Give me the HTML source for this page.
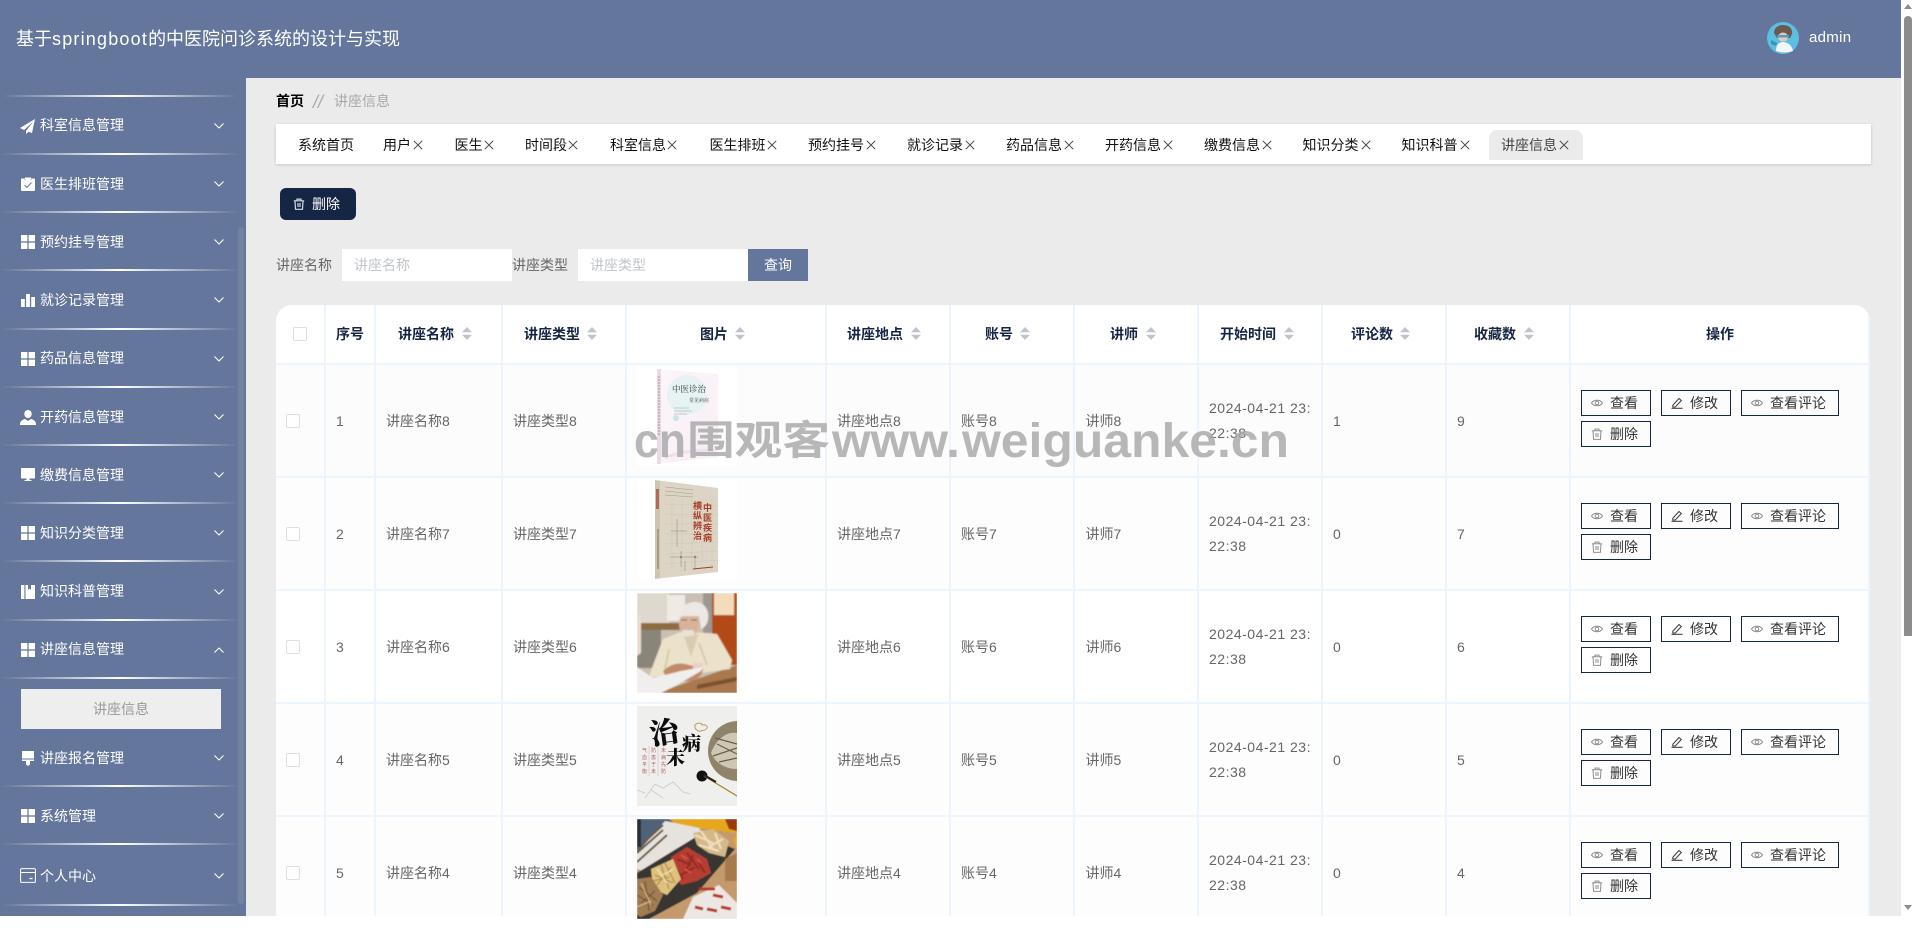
<!DOCTYPE html>
<html lang="zh"><head><meta charset="utf-8"><title>讲座信息</title>
<style>
*{box-sizing:border-box;margin:0;padding:0}
html,body{width:1912px;height:916px;overflow:hidden;background:#fff;font-family:"Liberation Sans","Noto Sans CJK SC",sans-serif;font-size:14px}
.a,.m,.ic,.ch,.sep,.t,.x,.c,.h,.s,.ck,.b,.l,svg.im{position:absolute}
#hd{position:absolute;left:0;top:0;width:1901px;height:78px;background:#64769b;color:#fff}
#side{position:absolute;left:0;top:78px;width:246px;height:838px;background:#64769b}
#main{position:absolute;left:246px;top:78px;width:1655px;height:838px;background:#ebebeb}
.m{left:40px;height:20px;line-height:20px;color:#fff;white-space:nowrap}
.ic{left:21px;width:14px;height:14px;fill:#fff}
.ch{left:214px;width:10px;height:6px;fill:none;stroke:#fff;stroke-width:1.1}
.sep{left:2px;width:236px;height:2px;background:linear-gradient(90deg,rgba(255,255,255,0),#fff 50%,rgba(255,255,255,0))}
.t{top:135px;height:20px;line-height:20px;color:#111;white-space:nowrap}
.x{top:140px;width:10px;height:10px;stroke:#444;stroke-width:1;fill:none}
.h{top:324px;height:20px;line-height:20px;font-weight:700;color:#152644;white-space:nowrap}
.s{top:327px;width:10px;height:13px;fill:#c0c4cc}
.ck{width:14px;height:14px;background:#fff;border:1px solid #dcdfe6;border-radius:2px;display:block}
.r{position:absolute;left:0;width:1912px;height:111px}
.c{top:46px;height:20px;line-height:20px;color:#666;white-space:nowrap}
.b{height:26px;border:1px solid #152644;color:#333;background:transparent;line-height:24px;white-space:nowrap}
.b svg{position:absolute;left:9px;top:6px;width:12px;height:12px;fill:none;stroke:#808080;stroke-width:.9}
.b svg.p{stroke:#444;stroke-width:1.1}
.b span{position:absolute;left:28px;top:0}
.l{top:0;width:2px;height:611px;background:#ecf5ff}
input{position:absolute;top:249px;width:170px;height:32px;border:0;background:#fff;padding-left:12px;font:14px "Liberation Sans","Noto Sans CJK SC",sans-serif;outline:0}
input::placeholder{color:#c0c4cc;opacity:1}
svg.im{width:100px;height:100px;left:637px;background:#fff}
</style></head><body>
<svg width="0" height="0" style="position:absolute">
<symbol id="grid" viewBox="0 0 14 14"><rect width="6.4" height="6.4" rx=".4"/><rect x="7.6" width="6.4" height="6.4" rx=".4"/><rect y="7.6" width="6.4" height="6.4" rx=".4"/><rect x="7.6" y="7.6" width="6.4" height="6.4" rx=".4"/></symbol>
<symbol id="eye" viewBox="0 0 12 12"><path d="M.5 6C3 2.300 9 2.300 11.500 6 9 9.700 3 9.700.5 6Z"/><circle cx="6" cy="6" r="1.800"/></symbol>
<symbol id="tr" viewBox="0 0 12 12"><path d="M.8 2.800h10.400M4 2.800V1.100h4v1.700M2 2.800l.5 8.500h7l.5-8.500M5 5v4M7 5v4"/></symbol>
<symbol id="ed" viewBox="0 0 12 12"><path d="M.5 11.300h11M1.800 8.300 8 1.500l2.300 2-6 6.500H1.800Z"/></symbol>
<symbol id="cl" viewBox="0 0 10 10"><path d="M.8.800l8.400 8.400M9.200.800.8 9.200"/></symbol>
<symbol id="sort" viewBox="0 0 10 13"><path d="M5 0l5 5.200H0ZM0 7.800h10L5 13Z"/></symbol>
</svg>

<div id="hd">
<div class="a" style="left:16px;top:27px;line-height:24px;font-size:18px;white-space:nowrap">基于<span style="letter-spacing:1.2px">springboot</span>的中医院问诊系统的设计与实现</div>
<svg class="a" style="left:1767px;top:22px" width="32" height="32" viewBox="0 0 32 32"><circle cx="16" cy="16" r="16" fill="#5cbfe2"/><path d="M7 11c0-6 5-8 9-8 5 0 10 3 9 9l-2 4H10Z" fill="#6d5a4e"/><ellipse cx="16" cy="15" rx="5" ry="4.500" fill="#e4c9b4"/><path d="M10 13h12v2.500H10Z" fill="#4e9fc4"/><path d="M9 29c0-6 3-9 7-9s9 3 10 9c-5 2-12 2-17 0Z" fill="#f3f6f8"/><path d="M4 18l6 3-1 3-5-2Z" fill="#3d92b4"/></svg>
<div class="a" style="left:1809px;top:28px;line-height:20px;font-size:15px;letter-spacing:.3px;white-space:nowrap">admin</div>
</div>

<div id="side"></div>
<div class="a" style="left:238px;top:227px;width:6px;height:677px;background:#73829f;border-radius:3px"></div>

<div class="sep" style="top:95px"></div><div class="sep" style="top:153px"></div><div class="sep" style="top:211px"></div><div class="sep" style="top:269px"></div><div class="sep" style="top:328px"></div><div class="sep" style="top:386px"></div><div class="sep" style="top:444px"></div><div class="sep" style="top:502px"></div><div class="sep" style="top:560px"></div><div class="sep" style="top:619px"></div><div class="sep" style="top:677px"></div><div class="sep" style="top:785px"></div><div class="sep" style="top:843px"></div><div class="sep" style="top:904px"></div>

<svg class="ic" style="left:20px;top:119px;width:15px;height:15px" viewBox="0 0 15 15"><path d="M15 0 0 9l4 2 9-8-7 9v3l2.500-2.200L12 14Z"/></svg><div class="m" style="top:115px">科室信息管理</div>
<svg class="ch" style="top:123px" viewBox="0 0 10 6"><path d="M.5.500 5 5 9.500.500"/></svg>

<svg class="ic" style="top:177px" viewBox="0 0 14 14"><path d="M1 1.500h3V.500h6v1h3a1 1 0 0 1 1 1V13a1 1 0 0 1-1 1H1a1 1 0 0 1-1-1V2.500a1 1 0 0 1 1-1Z"/><path d="M4 3V2M10 3V2" stroke="#64769b" stroke-width=".6"/><path d="M3.500 8l2.500 2.500 4.500-5" fill="none" stroke="#64769b" stroke-width="1"/></svg><div class="m" style="top:174px">医生排班管理</div>
<svg class="ch" style="top:181px" viewBox="0 0 10 6"><path d="M.5.500 5 5 9.500.500"/></svg>

<svg class="ic" style="top:235px"><use href="#grid"/></svg><div class="m" style="top:232px">预约挂号管理</div>
<svg class="ch" style="top:239px" viewBox="0 0 10 6"><path d="M.5.500 5 5 9.500.500"/></svg>

<svg class="ic" style="top:293px" viewBox="0 0 14 14"><rect y="6" width="3.800" height="8"/><rect x="5.100" y="1" width="3.800" height="13"/><rect x="10.200" y="4" width="3.800" height="10"/></svg><div class="m" style="top:290px">就诊记录管理</div>
<svg class="ch" style="top:297px" viewBox="0 0 10 6"><path d="M.5.500 5 5 9.500.500"/></svg>

<svg class="ic" style="top:352px"><use href="#grid"/></svg><div class="m" style="top:348px">药品信息管理</div>
<svg class="ch" style="top:356px" viewBox="0 0 10 6"><path d="M.5.500 5 5 9.500.500"/></svg>

<svg class="ic" style="left:20px;top:410px;width:16px;height:15px" viewBox="0 0 16 15"><ellipse cx="8" cy="4" rx="3.700" ry="4"/><path d="M0 15c0-3 1-5 5-6l3 2 3-2c4 1 5 3 5 6Z"/></svg><div class="m" style="top:407px">开药信息管理</div>
<svg class="ch" style="top:414px" viewBox="0 0 10 6"><path d="M.5.500 5 5 9.500.500"/></svg>

<svg class="ic" style="top:468px" viewBox="0 0 14 14"><rect width="14" height="10.500" rx=".5"/><path d="M5.500 10.500h3V12h2v1h-7v-1h2Z"/></svg><div class="m" style="top:465px">缴费信息管理</div>
<svg class="ch" style="top:472px" viewBox="0 0 10 6"><path d="M.5.500 5 5 9.500.500"/></svg>

<svg class="ic" style="top:526px"><use href="#grid"/></svg><div class="m" style="top:523px">知识分类管理</div>
<svg class="ch" style="top:530px" viewBox="0 0 10 6"><path d="M.5.500 5 5 9.500.500"/></svg>

<svg class="ic" style="top:585px" viewBox="0 0 14 14"><rect width="3.400" height="14"/><path d="M4.500 0H7v5l1.500-1.500L10 5V0h4v14H4.500Z"/></svg><div class="m" style="top:581px">知识科普管理</div>
<svg class="ch" style="top:589px" viewBox="0 0 10 6"><path d="M.5.500 5 5 9.500.500"/></svg>

<svg class="ic" style="top:643px"><use href="#grid"/></svg><div class="m" style="top:639px">讲座信息管理</div>
<svg class="ch" style="top:647px" viewBox="0 0 10 6"><path d="M.5 5.500 5 1l4.500 4.500"/></svg>

<div class="a" style="left:21px;top:689px;width:200px;height:40px;background:#eee;color:#999;text-align:center;line-height:40px">讲座信息</div>

<svg class="ic" style="left:22px;top:751px;width:12px;height:15px" viewBox="0 0 12 15"><rect width="12" height="7.500"/><path d="M0 8.500h12V10H8v3.500L6 15l-2-1.500V10H0Z"/></svg><div class="m" style="top:748px">讲座报名管理</div>
<svg class="ch" style="top:755px" viewBox="0 0 10 6"><path d="M.5.500 5 5 9.500.500"/></svg>

<svg class="ic" style="top:809px"><use href="#grid"/></svg><div class="m" style="top:806px">系统管理</div>
<svg class="ch" style="top:813px" viewBox="0 0 10 6"><path d="M.5.500 5 5 9.500.500"/></svg>

<svg class="ic" style="left:20px;top:868px;width:16px;height:15px;fill:none;stroke:#fff" viewBox="0 0 16 15"><rect x=".6" y=".6" width="14.800" height="13.800" rx="1.200"/><path d="M.6 4.500h14.800"/><path d="M9.500 10.500h3" stroke-width="1.400"/></svg><div class="m" style="top:866px">个人中心</div>
<svg class="ch" style="top:873px" viewBox="0 0 10 6"><path d="M.5.500 5 5 9.500.500"/></svg>

<div id="main"></div>

<div class="a" style="left:276px;top:91px;line-height:20px;font-weight:700;color:#000">首页</div>
<div class="a" style="left:313px;top:92px;line-height:20px;color:#aaa;font-size:18px;font-style:italic;letter-spacing:0">//</div>
<div class="a" style="left:334px;top:91px;line-height:20px;color:#a8a8a8">讲座信息</div>

<div class="a" style="left:276px;top:124px;width:1595px;height:40px;background:#fff;box-shadow:0 1px 3px rgba(0,0,0,.15)"></div>
<div class="a" style="left:1489px;top:130px;width:94px;height:30px;background:#ebebeb;border-radius:8px 8px 0 0"></div>
<div class="t" style="left:298px">系统首页</div>
<div class="t" style="left:383px">用户</div><svg class="x" style="left:413px"><use href="#cl"/></svg>
<div class="t" style="left:454.500px">医生</div><svg class="x" style="left:484px"><use href="#cl"/></svg>
<div class="t" style="left:525px">时间段</div><svg class="x" style="left:568px"><use href="#cl"/></svg>
<div class="t" style="left:610px">科室信息</div><svg class="x" style="left:667px"><use href="#cl"/></svg>
<div class="t" style="left:709.500px">医生排班</div><svg class="x" style="left:767px"><use href="#cl"/></svg>
<div class="t" style="left:808px">预约挂号</div><svg class="x" style="left:866px"><use href="#cl"/></svg>
<div class="t" style="left:907px">就诊记录</div><svg class="x" style="left:965px"><use href="#cl"/></svg>
<div class="t" style="left:1006px">药品信息</div><svg class="x" style="left:1064px"><use href="#cl"/></svg>
<div class="t" style="left:1105px">开药信息</div><svg class="x" style="left:1163px"><use href="#cl"/></svg>
<div class="t" style="left:1204px">缴费信息</div><svg class="x" style="left:1262px"><use href="#cl"/></svg>
<div class="t" style="left:1302.500px">知识分类</div><svg class="x" style="left:1360.500px"><use href="#cl"/></svg>
<div class="t" style="left:1401.500px">知识科普</div><svg class="x" style="left:1459.500px"><use href="#cl"/></svg>
<div class="t" style="left:1501px;color:#444">讲座信息</div><svg class="x" style="left:1559px"><use href="#cl"/></svg>

<div class="a" style="left:280px;top:188px;width:76px;height:32px;background:#152644;border-radius:6px;color:#fff">
<svg class="a" style="left:13px;top:10px;fill:none;stroke:#d4dce4;stroke-width:1.2" width="12" height="12"><use href="#tr"/></svg>
<span class="a" style="left:32px;top:6px;line-height:20px">删除</span></div>

<div class="a" style="left:276px;top:255px;line-height:20px;color:#666">讲座名称</div>
<input style="left:342px" placeholder="讲座名称">
<div class="a" style="left:512px;top:255px;line-height:20px;color:#666">讲座类型</div>
<input style="left:578px" placeholder="讲座类型">
<div class="a" style="left:748px;top:249px;width:60px;height:32px;background:#64769b;color:#fff;text-align:center;line-height:32px">查询</div>

<!-- table -->
<div class="a" style="left:276px;top:305px;width:1594px;height:611px;background:#fff;border-radius:16px 16px 0 0;overflow:hidden">
<div class="a" style="left:0;top:60px;width:1594px;height:111px;background:#fcfcfc"></div>
<div class="a" style="left:0;top:173px;width:1594px;height:111px;background:#fdfdfd"></div>
<div class="a" style="left:0;top:399px;width:1594px;height:212px;background:#fdfdfd"></div>
<div class="a" style="left:0;top:58px;width:1594px;height:2px;background:#ecf5ff"></div>
<div class="a" style="left:0;top:171px;width:1594px;height:2px;background:#ecf5ff"></div>
<div class="a" style="left:0;top:284px;width:1594px;height:2px;background:#ecf5ff"></div>
<div class="a" style="left:0;top:397px;width:1594px;height:2px;background:#ecf5ff"></div>
<div class="a" style="left:0;top:510px;width:1594px;height:2px;background:#ecf5ff"></div>
<div class="l" style="left:48px"></div><div class="l" style="left:98px"></div><div class="l" style="left:225px"></div><div class="l" style="left:349px"></div><div class="l" style="left:549px"></div><div class="l" style="left:673px"></div><div class="l" style="left:797px"></div><div class="l" style="left:921px"></div><div class="l" style="left:1045px"></div><div class="l" style="left:1169px"></div><div class="l" style="left:1293px"></div><div class="l" style="left:1592px"></div>
</div>

<i class="ck" style="left:293px;top:327px"></i>
<div class="h" style="left:336px">序号</div>
<div class="h" style="left:398px">讲座名称</div><svg class="s" style="left:462px"><use href="#sort"/></svg>
<div class="h" style="left:524px">讲座类型</div><svg class="s" style="left:587px"><use href="#sort"/></svg>
<div class="h" style="left:700px">图片</div><svg class="s" style="left:735px"><use href="#sort"/></svg>
<div class="h" style="left:847px">讲座地点</div><svg class="s" style="left:911px"><use href="#sort"/></svg>
<div class="h" style="left:985px">账号</div><svg class="s" style="left:1019.500px"><use href="#sort"/></svg>
<div class="h" style="left:1110px">讲师</div><svg class="s" style="left:1146px"><use href="#sort"/></svg>
<div class="h" style="left:1220px">开始时间</div><svg class="s" style="left:1284px"><use href="#sort"/></svg>
<div class="h" style="left:1351px">评论数</div><svg class="s" style="left:1400px"><use href="#sort"/></svg>
<div class="h" style="left:1474px">收藏数</div><svg class="s" style="left:1524px"><use href="#sort"/></svg>
<div class="h" style="left:1706px">操作</div>

<!-- row 1 -->
<div class="r" style="top:365px">
<i class="ck" style="left:286px;top:49px"></i>
<span class="c" style="left:336px">1</span><span class="c" style="left:386px">讲座名称8</span><span class="c" style="left:513px">讲座类型8</span>
<svg class="im" style="top:1px" viewBox="0 0 100 100"><defs><linearGradient id="g1" x1="0" y1="0" x2="1" y2="1"><stop offset="0" stop-color="#fbf6fa"/><stop offset="1" stop-color="#f9eef5"/></linearGradient><filter id="bb"><feGaussianBlur stdDeviation=".25"/></filter></defs>
<g filter="url(#bb)"><path d="M20 3 81 8v83L20 98Z" fill="url(#g1)"/><path d="M20 3h4v95h-4Z" fill="#e9dbe4"/><circle cx="50" cy="29" r="20" fill="#e6f2f3"/><circle cx="39" cy="52" r="3" fill="#c9e4e6"/>
<text x="35" y="26" font-family="Liberation Serif,Noto Serif CJK SC,serif" font-size="8.500" fill="#333">中医诊治</text>
<text x="52" y="36" font-family="Liberation Serif,Noto Serif CJK SC,serif" font-size="5" fill="#444">常见病症</text>
<path d="M37 42h15M37 45h18M37 48h13" stroke="#b5bcbc" stroke-width=".7"/><path d="M22 10v60" stroke="#b99" stroke-width="1.200" stroke-dasharray="2 1"/><path d="M28 92c12-6 30-8 50-8" stroke="#efe0ee" stroke-width="3" fill="none"/></g></svg>
<span class="c" style="left:837px">讲座地点8</span><span class="c" style="left:961px">账号8</span><span class="c" style="left:1085.500px">讲师8</span>
<span class="c" style="left:1209px;top:33px;letter-spacing:.5px">2024-04-21 23:</span><span class="c" style="left:1209px;top:58px;letter-spacing:.5px">22:38</span>
<span class="c" style="left:1333px">1</span><span class="c" style="left:1457px">9</span>
<div class="b" style="left:1581px;top:25px;width:70px"><svg><use href="#eye"/></svg><span>查看</span></div>
<div class="b" style="left:1661px;top:25px;width:70px"><svg class="p"><use href="#ed"/></svg><span>修改</span></div>
<div class="b" style="left:1741px;top:25px;width:98px"><svg><use href="#eye"/></svg><span>查看评论</span></div>
<div class="b" style="left:1581px;top:56px;width:70px"><svg><use href="#tr"/></svg><span>删除</span></div>
</div>

<!-- row 2 -->
<div class="r" style="top:478px">
<i class="ck" style="left:286px;top:49px"></i>
<span class="c" style="left:336px">2</span><span class="c" style="left:386px">讲座名称7</span><span class="c" style="left:513px">讲座类型7</span>
<svg class="im" style="top:1px" viewBox="0 0 100 100" font-family="Liberation Sans,Noto Sans CJK SC,sans-serif">
<g filter="url(#bb)"><path d="M18 1 81 9v84l-63 7Z" fill="#dcd5c5"/><path d="M18 1 23 2v97l-5 1Z" fill="#cdc5b1"/>
<path d="M28 25l53 2M28 35l53 1M28 45l53 0M28 55l53-1M28 65l53-2M28 75l53-3M28 85l53-4M35 20v72M45 20v72M55 20v72M65 20v72M75 20v72" stroke="#cbc3af" stroke-width=".4"/>
<path d="M19 10h3v20h-3Z" fill="#a4432e" opacity=".7"/><path d="M20 50h2v40h-2Z" fill="#8d7f6d" opacity=".6"/>
<path d="M28 8l28 3M28 12l28 3M28 16l28 2" stroke="#a09a88" stroke-width=".6"/>
<g fill="#a83a25" font-weight="700" font-size="9"><text x="66" y="32">中</text><text x="66" y="42">医</text><text x="66" y="52">疾</text><text x="66" y="62">病</text><text x="56" y="30">横</text><text x="56" y="40">纵</text><text x="56" y="50">辨</text><text x="56" y="60">治</text></g>
<path d="M33 78h28M44 72v16M58 76v14M40 40v28M34 52h16M48 82v10" stroke="#7a7568" stroke-width=".4" fill="none"/><circle cx="44" cy="78" r=".8" fill="#444"/><circle cx="58" cy="78" r=".8" fill="#444"/>
<path d="M56 90l20-2" stroke="#a83a25" stroke-width="1"/></g></svg>
<span class="c" style="left:837px">讲座地点7</span><span class="c" style="left:961px">账号7</span><span class="c" style="left:1085.500px">讲师7</span>
<span class="c" style="left:1209px;top:33px;letter-spacing:.5px">2024-04-21 23:</span><span class="c" style="left:1209px;top:58px;letter-spacing:.5px">22:38</span>
<span class="c" style="left:1333px">0</span><span class="c" style="left:1457px">7</span>
<div class="b" style="left:1581px;top:25px;width:70px"><svg><use href="#eye"/></svg><span>查看</span></div>
<div class="b" style="left:1661px;top:25px;width:70px"><svg class="p"><use href="#ed"/></svg><span>修改</span></div>
<div class="b" style="left:1741px;top:25px;width:98px"><svg><use href="#eye"/></svg><span>查看评论</span></div>
<div class="b" style="left:1581px;top:56px;width:70px"><svg><use href="#tr"/></svg><span>删除</span></div>
</div>

<!-- row 3 -->
<div class="r" style="top:591px">
<i class="ck" style="left:286px;top:49px"></i>
<span class="c" style="left:336px">3</span><span class="c" style="left:386px">讲座名称6</span><span class="c" style="left:513px">讲座类型6</span>
<svg class="im" style="top:2px" viewBox="0 0 100 100"><defs><filter id="bl"><feGaussianBlur stdDeviation=".9"/></filter><clipPath id="cp"><rect width="100" height="100"/></clipPath></defs>
<g filter="url(#bl)" clip-path="url(#cp)">
<rect width="100" height="100" fill="#c9c0b3"/><rect width="32" height="30" fill="#dfd8ce"/><rect x="66" width="10" height="40" fill="#9e9890"/><rect x="75" width="25" height="72" fill="#b24a12"/><rect x="77" width="20" height="22" fill="#f3dcbc"/><rect x="30" y="2" width="18" height="26" fill="#efebe4"/>
<rect x="4" y="30" width="40" height="7" fill="#8d6d40"/><rect x="0" y="37" width="24" height="38" fill="#8a857a"/>
<path d="M20 100 100 72v28Z" fill="#a9784d"/><path d="M60 92 100 84v4l-40 8Z" fill="#7b4f2e"/>
<path d="M13 80 26 46 46 38l34 3 15 26-2 9-30 4-30 3-20 1Z" fill="#ece2cb"/>
<path d="M46 40l8 24 8-24-7 4Z" fill="#d9ccae"/><path d="M62 50l8 22M32 56l-4 20" stroke="#cfc1a2" stroke-width="1.500"/>
<ellipse cx="52" cy="31" rx="10" ry="13" fill="#d8b39a"/><path d="M42 24c0-10 8-15 16-15 9 0 15 8 13 18-1 5-4 8-7 9l-2-13c-7 1-13-1-20 1Z" fill="#ece9e4"/><path d="M44 40c3 5 11 5 14 0l-2-3h-10Z" fill="#e8e2d8"/><path d="M44 27h6M54 27h6" stroke="#54392c" stroke-width=".8"/>
<path d="M26 78c8-8 18-9 26-6l14 3c0 8-8 15-18 13l-18-2Z" fill="#c08a68"/><path d="M56 70l10 0 0 6-10 2Z" fill="#e8cfc4"/>
<path d="M0 74 16 85l28-7 22-4-2 4-24 14-16 8H0Z" fill="#f1efee"/><path d="M0 22h4v38l-4 3Z" fill="#ecdccf"/>
</g></svg>
<span class="c" style="left:837px">讲座地点6</span><span class="c" style="left:961px">账号6</span><span class="c" style="left:1085.500px">讲师6</span>
<span class="c" style="left:1209px;top:33px;letter-spacing:.5px">2024-04-21 23:</span><span class="c" style="left:1209px;top:58px;letter-spacing:.5px">22:38</span>
<span class="c" style="left:1333px">0</span><span class="c" style="left:1457px">6</span>
<div class="b" style="left:1581px;top:25px;width:70px"><svg><use href="#eye"/></svg><span>查看</span></div>
<div class="b" style="left:1661px;top:25px;width:70px"><svg class="p"><use href="#ed"/></svg><span>修改</span></div>
<div class="b" style="left:1741px;top:25px;width:98px"><svg><use href="#eye"/></svg><span>查看评论</span></div>
<div class="b" style="left:1581px;top:56px;width:70px"><svg><use href="#tr"/></svg><span>删除</span></div>
</div>

<!-- row 4 -->
<div class="r" style="top:704px">
<i class="ck" style="left:286px;top:49px"></i>
<span class="c" style="left:336px">4</span><span class="c" style="left:386px">讲座名称5</span><span class="c" style="left:513px">讲座类型5</span>
<svg class="im" style="top:2px" viewBox="0 0 100 100"><rect width="100" height="100" fill="#efefee"/>
<circle cx="101" cy="45" r="30" fill="#8f8469"/><path d="M74 47c5-14 16-22 26-20v36c-11 0-21-5-26-16Z" fill="#cfc7b6"/><path d="M76 50l24-8M80 38l20 10M78 32l22 6M82 56l18-4" stroke="#6b5c46" stroke-width="1.200"/>
<g font-family="Liberation Serif,Noto Serif CJK SC,serif" font-weight="900" fill="#0c0c0c"><text x="13" y="37" font-size="29" transform="rotate(-8 26 28)">治</text><text x="29" y="58" font-size="19">未</text><text x="45" y="44" font-size="19">病</text></g>
<g font-family="Liberation Sans,Noto Sans CJK SC,sans-serif" font-size="5" fill="#b3605f"><text x="5" y="46">气</text><text x="5" y="53">血</text><text x="5" y="60">平</text><text x="5" y="67">衡</text><text x="14" y="46">防</text><text x="14" y="53">患</text><text x="14" y="60">于</text><text x="14" y="67">未</text><text x="24" y="46">未</text><text x="24" y="53">病</text><text x="24" y="60">先</text><text x="24" y="67">防</text></g>
<path d="M12 40v30M21 40v30" stroke="#c7b2ae" stroke-width=".5"/>
<circle cx="65" cy="70" r="5.500" fill="#111"/><path d="M67 70 100 90" stroke="#a78232" stroke-width="1.200"/><path d="M67 69l12 7" stroke="#222" stroke-width="2"/>
<path d="M58 19c3-3 7-2 7 0 3-1 6 1 5 3-1 3-5 2-6 3-3 1-7-2-6-6Z" fill="none" stroke="#bb9c5f" stroke-width="1"/>
<path d="M8 92l10-14 8 4 10-6 10 10 8 2M0 84l8 3M14 84l12 8" stroke="#c9c9c9" stroke-width=".8" fill="none"/></svg>
<span class="c" style="left:837px">讲座地点5</span><span class="c" style="left:961px">账号5</span><span class="c" style="left:1085.500px">讲师5</span>
<span class="c" style="left:1209px;top:33px;letter-spacing:.5px">2024-04-21 23:</span><span class="c" style="left:1209px;top:58px;letter-spacing:.5px">22:38</span>
<span class="c" style="left:1333px">0</span><span class="c" style="left:1457px">5</span>
<div class="b" style="left:1581px;top:25px;width:70px"><svg><use href="#eye"/></svg><span>查看</span></div>
<div class="b" style="left:1661px;top:25px;width:70px"><svg class="p"><use href="#ed"/></svg><span>修改</span></div>
<div class="b" style="left:1741px;top:25px;width:98px"><svg><use href="#eye"/></svg><span>查看评论</span></div>
<div class="b" style="left:1581px;top:56px;width:70px"><svg><use href="#tr"/></svg><span>删除</span></div>
</div>

<!-- row 5 -->
<div class="r" style="top:817px">
<i class="ck" style="left:286px;top:49px"></i>
<span class="c" style="left:336px">5</span><span class="c" style="left:386px">讲座名称4</span><span class="c" style="left:513px">讲座类型4</span>
<svg class="im" style="top:2px" viewBox="0 0 100 100"><defs><filter id="bl2"><feGaussianBlur stdDeviation=".5"/></filter><clipPath id="cp2"><rect width="100" height="100"/></clipPath></defs>
<g filter="url(#bl2)" clip-path="url(#cp2)">
<rect width="100" height="100" fill="#c49a6d"/><rect width="36" height="42" fill="#4f6478"/><path d="M28 2 62 8 66 18 6 52 0 50V34Z" fill="#e6e2de"/><path d="M32 0H100V14L62 9 38 4Z" fill="#e6a71f"/><path d="M88 0h12v12l-8-2Z" fill="#9b3a11"/><path d="M96 20l4-4v14Z" fill="#e6a71f"/>
<path d="M0 30 26 6M0 43 30 16M0 34 26 11" stroke="#6b5a44" stroke-width="2"/><rect width="4" height="28" fill="#2b2f35"/>
<path d="M0 54 62 16 98 30 60 74 12 100H0Z" fill="#393633"/>
<path d="M56 14 76 10 92 22 88 38 72 34 60 26Z" fill="#d6b888"/><path d="M58 16l18 8M64 12l12 18M72 28l14-8M62 26l20 6M78 14l6 16" stroke="#efe0c2" stroke-width="2"/>
<path d="M34 38 50 28 70 40 74 54 60 62 44 66 36 52Z" fill="#b63c30"/><path d="M40 40l14 6M50 34l12 16M44 56l14-8M56 36l-6 14M62 44l6 10M38 48l8 12" stroke="#8e2a22" stroke-width="1.800"/><path d="M44 36l6 4M60 40l4 4M48 50l6 4" stroke="#d85a4c" stroke-width="1.400"/>
<path d="M14 50 36 40 44 60 30 76 16 70Z" fill="#e0c27f"/><path d="M18 56l18 8M24 46l8 24M34 48 20 66M16 62l16-4M28 44l10 20" stroke="#b08a4a" stroke-width="1.200"/><path d="M20 50l10 14M36 50l-10 6" stroke="#f1e2b4" stroke-width="1.400"/>
<path d="M0 60 14 58 26 76 18 92 4 98 0 96Z" fill="#a27b52"/><path d="M2 68l18 14M4 84l14-12M8 62l4 30M0 76l16 10" stroke="#6f4f30" stroke-width="1"/><path d="M4 64l10 22M0 88l14-6" stroke="#d9bd8d" stroke-width="1"/>
<path d="M56 78 82 66 100 84V100H46Z" fill="#ece7e2"/><path d="M62 70 78 70M76 76l10 2M70 90l10 2M84 88l10 2M58 88l8 2" stroke="#b8392c" stroke-width="3"/><path d="M88 40 100 34V62L88 62Z" fill="#a77a4c"/>
</g></svg>
<span class="c" style="left:837px">讲座地点4</span><span class="c" style="left:961px">账号4</span><span class="c" style="left:1085.500px">讲师4</span>
<span class="c" style="left:1209px;top:33px;letter-spacing:.5px">2024-04-21 23:</span><span class="c" style="left:1209px;top:58px;letter-spacing:.5px">22:38</span>
<span class="c" style="left:1333px">0</span><span class="c" style="left:1457px">4</span>
<div class="b" style="left:1581px;top:25px;width:70px"><svg><use href="#eye"/></svg><span>查看</span></div>
<div class="b" style="left:1661px;top:25px;width:70px"><svg class="p"><use href="#ed"/></svg><span>修改</span></div>
<div class="b" style="left:1741px;top:25px;width:98px"><svg><use href="#eye"/></svg><span>查看评论</span></div>
<div class="b" style="left:1581px;top:56px;width:70px"><svg><use href="#tr"/></svg><span>删除</span></div>
</div>

<!-- watermark -->
<svg class="a" style="left:0;top:0;pointer-events:none" width="1912" height="916">
<g fill="#a8a8a8" fill-opacity=".83" font-family="Liberation Sans,Noto Sans CJK SC,sans-serif" font-weight="700">
<text x="634" y="457" font-size="48" textLength="52" lengthAdjust="spacingAndGlyphs">cn</text>
<text x="687" y="454" font-size="40" textLength="143" lengthAdjust="spacingAndGlyphs">围观客</text>
<text x="832" y="457" font-size="48" textLength="128" lengthAdjust="spacingAndGlyphs">www.</text>
<text x="962" y="457" font-size="48" textLength="327" lengthAdjust="spacingAndGlyphs">weiguanke.cn</text>
</g></svg>

<!-- page scrollbar -->
<div class="a" style="left:1901px;top:0;width:11px;height:916px;background:#fff"></div>
<div class="a" style="left:1904px;top:16px;width:8px;height:620px;background:#8c8c8c;border-radius:4px 4px 0 0"></div>
<svg class="a" style="left:1904px;top:4px" width="8" height="5"><path d="M4 0l4 5H0Z" fill="#8c8c8c"/></svg>
<svg class="a" style="left:1904px;top:905px" width="8" height="5"><path d="M0 0h8L4 5Z" fill="#8c8c8c"/></svg>
</body></html>
